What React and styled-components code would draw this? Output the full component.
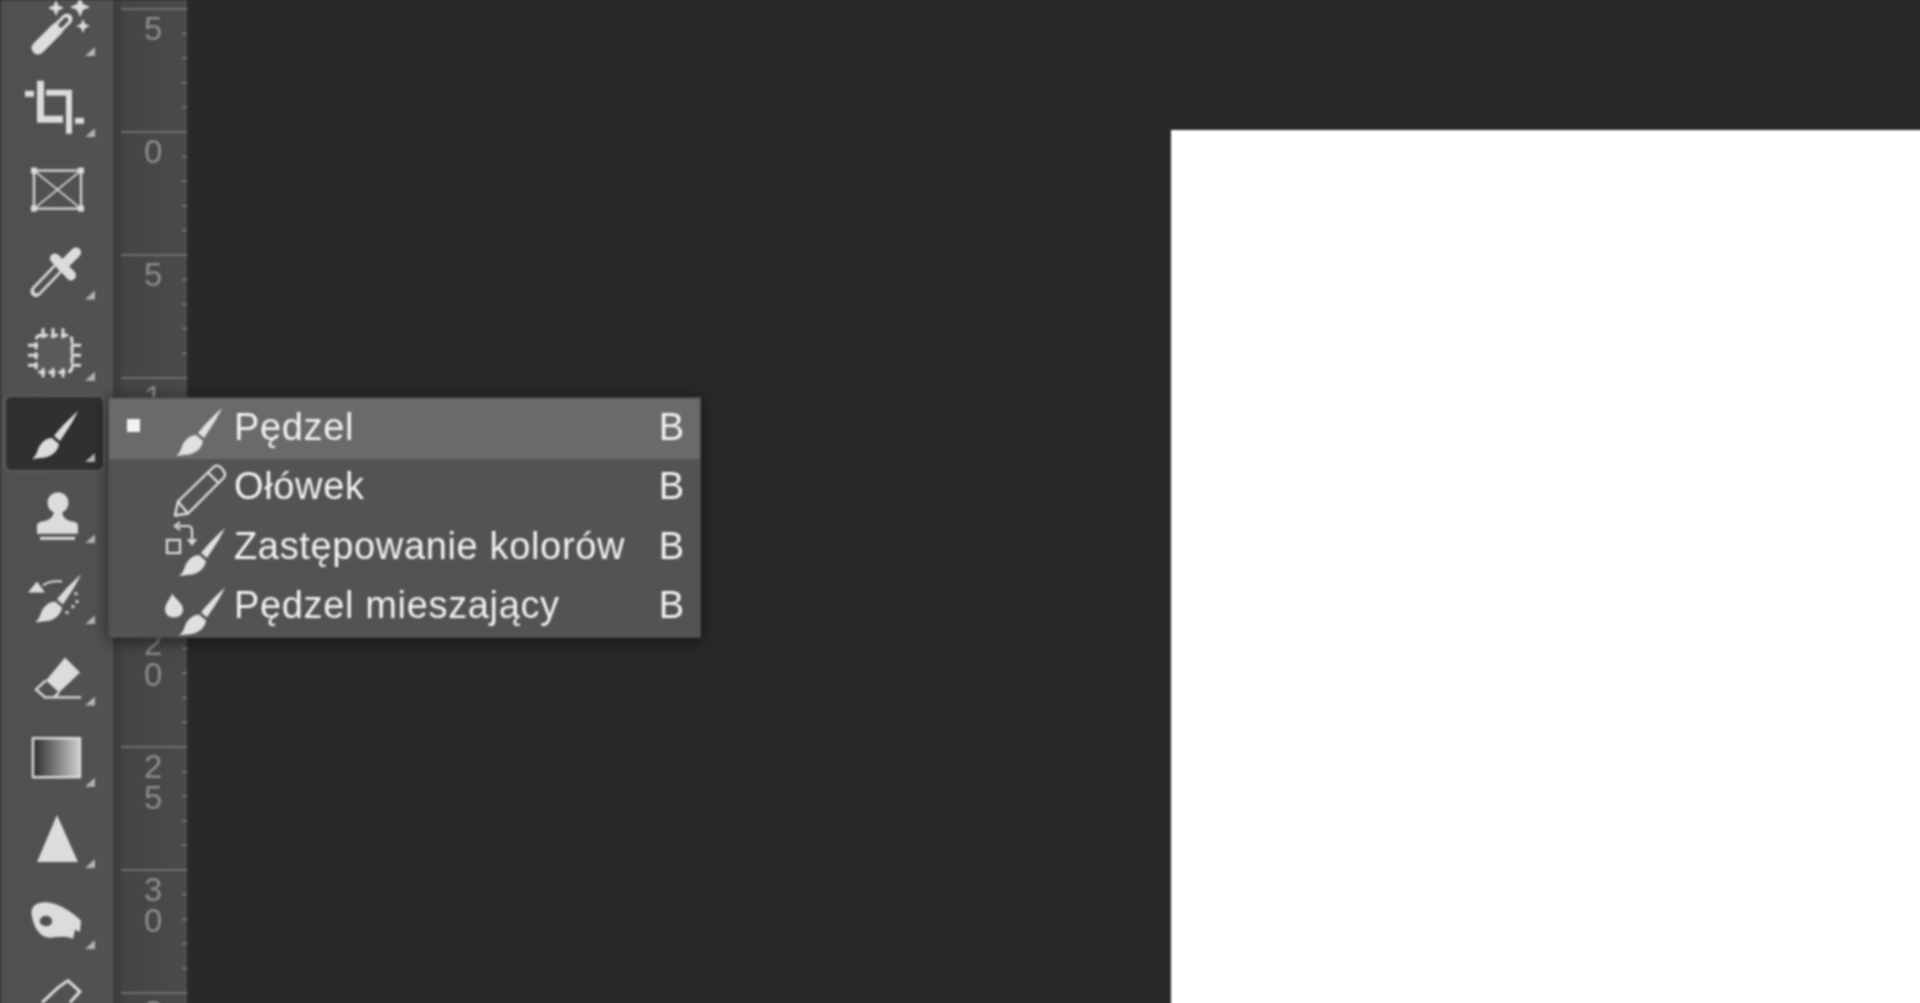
import React from 'react'
import styled, { createGlobalStyle } from 'styled-components'

const Global = createGlobalStyle`
  html, body { margin: 0; height: 100%; background: #292929; overflow: hidden; }
  body { font-family: "Liberation Sans", Arial, sans-serif; }
`

const Page = styled.div`
  position: relative;
  display: flex;
  width: 1926px;
  height: 1009px;
  overflow: hidden;
  filter: blur(0.8px);
`

const Toolbar = styled.div`
  width: 113px;
  flex-shrink: 0;
  background: linear-gradient(to right, #474747, #505050 3px, #525252);
  overflow: hidden;
`

const ToolList = styled.div`
  margin-top: -13px;
`

const Tool = styled.div`
  position: relative;
  height: 81.2px;

  &::before {
    content: ${p => (p.$active ? '""' : 'none')};
    position: absolute;
    inset: 2px 8px 2.2px 4px;
    background: #303030;
    border: 2px solid #5e5e5e;
    border-radius: 7px;
    box-sizing: border-box;
  }

  &::after {
    content: ${p => (p.$corner ? '""' : 'none')};
    position: absolute;
    right: 18px;
    bottom: 12.2px;
    width: 10px;
    height: 9px;
    background: #b4b4b4;
    clip-path: polygon(100% 0, 100% 100%, 0 100%);
  }

  svg {
    position: relative;
    display: block;
  }
`

const Divider = styled.div`
  width: 8px;
  flex-shrink: 0;
  background: #3e3e3e;
`

const Ruler = styled.div`
  width: 66px;
  flex-shrink: 0;
  padding-top: 8px;
  background: linear-gradient(to right, #444444, #4b4b4b);
  overflow: hidden;
`

const RulerSegment = styled.div`
  height: 123px;
  box-sizing: border-box;
  border-top: 2px solid #6e6e6e;
  padding: 3px 0 0 23px;
  color: #8c8c8c;
  font-size: 33px;
  line-height: 31px;
  background-image: linear-gradient(to bottom, #757575 2px, transparent 2px);
  background-size: 6px 24.6px;
  background-position: right -0.6px top 22.6px;
  background-repeat: repeat-y;
`

const Digit = styled.div``

const Canvas = styled.div`
  flex: 1;
  padding: 130px 0 0 984px;
  background: #292929;
`

const Doc = styled.div`
  height: 100%;
  background: #fff;
`

const Menu = styled.div`
  position: absolute;
  left: 108px;
  top: 397px;
  width: 593px;
  box-sizing: border-box;
  padding-top: 1px;
  background: #535353;
  border: 1px solid #484848;
  border-top-color: #4c4c4c;
  box-shadow: 0 3px 16px rgba(0, 0, 0, 0.55);
`

const MenuRow = styled.div`
  display: flex;
  align-items: center;
  height: 59.5px;
  padding-right: 16px;
  background: ${p => (p.$selected ? '#6a6a6a' : 'transparent')};
  color: #f2f2f2;
  font-size: 38px;
  line-height: 60px;
`

const Bullet = styled.span`
  width: 13px;
  height: 13px;
  margin: -6px 0 0 18px;
  flex-shrink: 0;
  background: ${p => (p.$on ? '#f2f2f2' : 'transparent')};
`

const RowIcon = styled.svg`
  width: 80px;
  height: 59.5px;
  margin-left: 4px;
  flex-shrink: 0;
  color: #e0e0e0;
  overflow: visible;
`

const Label = styled.span`
  flex: 1;
  margin: -4px 0 0 10px;
  letter-spacing: 0.65px;
  white-space: nowrap;
`

const Key = styled.span`
  margin-top: -4px;
`

const Brush = ({ dx = 0, dy = 0 }) => (
  <g transform={`translate(${dx} ${dy})`} fill="currentColor">
    <path d="M78 411 L75 417 C71 425 65 433 60 441 L54 436 C60 428 70 418 78 411Z" />
    <path d="M52 438 L59 444 C58 452 50 458 40 458 L32 459 C38 455 37 448 41 444 C44 440 48 438 52 438Z" />
  </g>
)

const Sparkle = ({ x, y, r }) => (
  <path d={`M${x} ${y - r} L${x + r * 0.3} ${y - r * 0.3} L${x + r} ${y} L${x + r * 0.3} ${y + r * 0.3} L${x} ${y + r} L${x - r * 0.3} ${y + r * 0.3} L${x - r} ${y} L${x - r * 0.3} ${y - r * 0.3}Z`} fill="currentColor" />
)

const Wand = () => (
  <>
    <path d="M38 48 L57 29" stroke="currentColor" strokeWidth="13" strokeLinecap="round" />
    <path d="M60 26 L67 19" stroke="currentColor" strokeWidth="11" strokeLinecap="round" />
    <path d="M61 25 L66 20" stroke="#525252" strokeWidth="5" strokeLinecap="round" />
    <Sparkle x={56} y={8} r={8} />
    <Sparkle x={80} y={7} r={10} />
    <Sparkle x={83} y={26} r={7} />
  </>
)

const Crop = () => (
  <g fill="currentColor">
    <path d="M37 81 H44 V116 H63 V123 H37Z" />
    <path d="M46 90 H72 V134 H66 V96 H46Z" />
    <rect x="25" y="91" width="9" height="6" />
    <rect x="75" y="118" width="9" height="6" />
  </g>
)

const Frame = () => (
  <g stroke="currentColor" fill="none">
    <rect x="34" y="171" width="47" height="38" strokeWidth="2.2" />
    <path d="M34 171 L81 209 M81 171 L34 209" strokeWidth="1.6" />
    <g fill="currentColor" stroke="none">
      <rect x="31" y="168" width="6" height="6" />
      <rect x="78" y="168" width="6" height="6" />
      <rect x="31" y="206" width="6" height="6" />
      <rect x="78" y="206" width="6" height="6" />
    </g>
  </g>
)

const Dropper = () => (
  <>
    <path d="M36 291 L58 268" stroke="currentColor" strokeWidth="11" strokeLinecap="round" />
    <path d="M37 290 L58 268" stroke="#525252" strokeWidth="6" strokeLinecap="round" />
    <path d="M55 258 L71 275 M62 266 L76 252" stroke="currentColor" strokeWidth="10" strokeLinecap="round" />
  </>
)

const Artboard = () => (
  <g stroke="currentColor" strokeWidth="3" fill="none">
    <rect x="36" y="335" width="36" height="37" rx="5" fill="#5a5a5a" strokeDasharray="7 3" />
    <path d="M28 345 H38 M28 355 H38 M28 365 H38 M71 345 H81 M71 355 H81 M71 365 H81" />
    <path d="M43 328 V338 M53 328 V338 M63 328 V338 M43 368 V377 M53 368 V377 M63 368 V377" />
  </g>
)

const Stamp = () => (
  <g fill="currentColor">
    <circle cx="58" cy="503" r="10.5" />
    <path d="M54 510 H62 C62 518 66 521 74 522 C77 523 78 524 78 527 V534 H37 V527 C37 524 38 523 41 522 C49 521 54 518 54 510Z" />
    <rect x="40" y="537" width="35" height="3" />
  </g>
)

const Heal = () => (
  <>
    <Brush dx={3} dy={164} />
    <path d="M28 593 L37 582 L45 593Z" fill="currentColor" />
    <path d="M43 586 C49 581 55 581 62 582" stroke="currentColor" strokeWidth="2" fill="none" />
    <g fill="currentColor">
      <circle cx="76" cy="594" r="1.7" />
      <circle cx="77" cy="602" r="1.7" />
      <circle cx="73" cy="607" r="1.7" />
      <circle cx="67" cy="613" r="1.7" />
    </g>
  </>
)

const Eraser = () => (
  <>
    <path d="M65 657 L80 672 L59 692 L46 680Z" fill="currentColor" />
    <path d="M46 680 L36 689 L45 697 H60 M59 692 L54 697 M45 697 H81" stroke="currentColor" strokeWidth="2.4" fill="none" />
  </>
)

const Triangle = () => <path d="M57 815 L78 862 H37Z" fill="currentColor" />

const Gradient = () => (
  <>
    <defs>
      <linearGradient id="grad">
        <stop offset="0" stopColor="#2c2c2c" />
        <stop offset="1" stopColor="#cfcfcf" />
      </linearGradient>
    </defs>
    <rect x="33" y="738" width="47" height="39" fill="url(#grad)" stroke="#dcdcdc" strokeWidth="2.4" />
  </>
)

const Blob = () => (
  <path
    fillRule="evenodd"
    fill="currentColor"
    d="M32 917 C29 906 38 901 50 903 C62 905 74 914 81 921 L80 932 L75 930 L73 939 C66 936 58 937 50 938 C40 938 34 928 32 917Z M46 916 C41 916 39 920 40 923 C42 927 50 928 52 923 C53 919 50 916 46 916Z"
  />
)

const Bucket = () => (
  <path d="M42 1003 L58 988 L68 981 L80 992 L70 1003" stroke="currentColor" strokeWidth="3" fill="none" />
)

const Pencil = () => (
  <g stroke="currentColor" strokeWidth="2.4" fill="none" strokeLinejoin="round">
    <path d="M175 514 L178 500 L213 466 C216 463 219 464 221 466 L224 470 C226 473 225 475 223 477 L188 512Z" />
    <path d="M208 471 L219 482 M178 500 L188 512" />
  </g>
)

const Replace = () => (
  <g fill="none" stroke="currentColor" strokeWidth="2.2">
    <rect x="167" y="539" width="13" height="13" />
    <path d="M178 525 H188 C191 525 192 527 192 530 V541" />
    <path d="M180 521 L175 525 L180 529 M188 538 L192 543 L196 538" />
  </g>
)

const Drop = () => (
  <path d="M172 592 C176 598 183 602 183 608 C183 613 179 616 174 616 C169 616 165 613 165 608 C165 602 170 598 172 592Z" fill="currentColor" />
)

const tools = [
  { Icon: Wand, corner: true },
  { Icon: Crop, corner: true },
  { Icon: Frame, corner: false },
  { Icon: Dropper, corner: true },
  { Icon: Artboard, corner: true },
  { Icon: () => <Brush />, corner: true, active: true },
  { Icon: Stamp, corner: true },
  { Icon: Heal, corner: true },
  { Icon: Eraser, corner: true },
  { Icon: Gradient, corner: true },
  { Icon: Triangle, corner: true },
  { Icon: Blob, corner: true },
  { Icon: Bucket, corner: true },
]

const rulerMarks = ['5', '0', '5', '10', '15', '20', '25', '30', '35']

const menuItems = [
  { label: 'Pędzel', selected: true, icon: <Brush dx={144} dy={-4} /> },
  { label: 'Ołówek', icon: <Pencil /> },
  { label: 'Zastępowanie kolorów', icon: <><Replace /><Brush dx={147} dy={116} /></> },
  { label: 'Pędzel mieszający', icon: <><Drop /><Brush dx={147} dy={175} /></> },
]

export default function App() {
  return (
    <Page>
      <Global />
      <Toolbar>
        <ToolList>
          {tools.map(({ Icon, corner, active }, i) => (
            <Tool key={i} $corner={corner} $active={active}>
              <svg width="112" height="81.2" viewBox={`0 ${-13 + i * 81.2} 112 81.2`} color="#dcdcdc">
                <Icon />
              </svg>
            </Tool>
          ))}
        </ToolList>
      </Toolbar>
      <Divider />
      <Ruler>
        {rulerMarks.map((mark, i) => (
          <RulerSegment key={i}>
            {mark.split('').map((d, j) => <Digit key={j}>{d}</Digit>)}
          </RulerSegment>
        ))}
      </Ruler>
      <Canvas>
        <Doc />
      </Canvas>
      <Menu>
        {menuItems.map((item, i) => (
          <MenuRow key={item.label} $selected={item.selected}>
            <Bullet $on={item.selected} />
            <RowIcon viewBox={`144 ${398 + i * 59.5} 80 59.5`}>{item.icon}</RowIcon>
            <Label>{item.label}</Label>
            <Key>B</Key>
          </MenuRow>
        ))}
      </Menu>
    </Page>
  )
}
